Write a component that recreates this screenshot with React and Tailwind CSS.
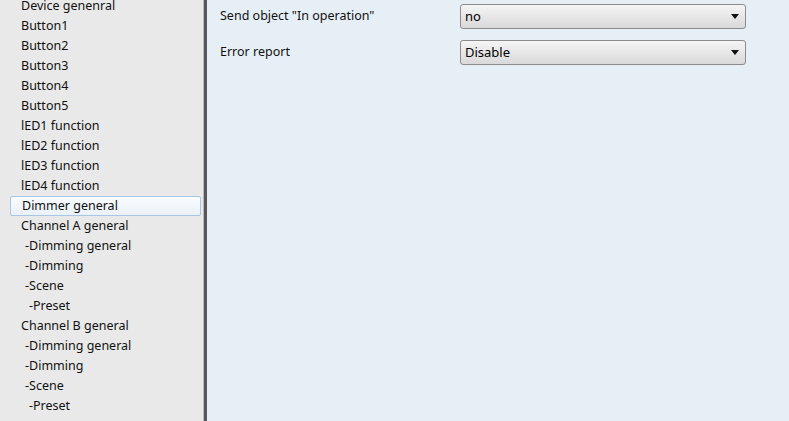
const items = [
  { label: 'Device genenral', indent: 'pl-[21px]' },
  { label: 'Button1', indent: 'pl-[21px]' },
  { label: 'Button2', indent: 'pl-[21px]' },
  { label: 'Button3', indent: 'pl-[21px]' },
  { label: 'Button4', indent: 'pl-[21px]' },
  { label: 'Button5', indent: 'pl-[21px]' },
  { label: 'lED1 function', indent: 'pl-[21px]' },
  { label: 'lED2 function', indent: 'pl-[21px]' },
  { label: 'lED3 function', indent: 'pl-[21px]' },
  { label: 'lED4 function', indent: 'pl-[21px]' },
  { label: 'Dimmer general', indent: 'pl-[21px]', selected: true },
  { label: 'Channel A general', indent: 'pl-[21px]' },
  { label: '-Dimming general', indent: 'pl-[25px]' },
  { label: '-Dimming', indent: 'pl-[25px]' },
  { label: '-Scene', indent: 'pl-[25px]' },
  { label: '-Preset', indent: 'pl-[29px]' },
  { label: 'Channel B general', indent: 'pl-[21px]' },
  { label: '-Dimming general', indent: 'pl-[25px]' },
  { label: '-Dimming', indent: 'pl-[25px]' },
  { label: '-Scene', indent: 'pl-[25px]' },
  { label: '-Preset', indent: 'pl-[29px]' },
]

function Select({ value }) {
  return (
    <div className="w-[286px] h-[25px] flex items-center justify-between pl-[4px] pr-[6px] rounded-[3px] border border-[#8c8c8c] bg-gradient-to-b from-[#f5f5f5] to-[#d9d9d9] text-[13px] text-black">
      <span>{value}</span>
      <svg width="8" height="5" viewBox="0 0 8 5">
        <path d="M0 0h8L4 5z" fill="#111" />
      </svg>
    </div>
  )
}

export default function App() {
  return (
    <div
      className="w-[789px] h-[421px] flex overflow-hidden"
      style={{ fontFamily: '"Noto Sans", "Open Sans", sans-serif' }}
    >
      <div className="w-[203px] shrink-0 bg-[#e9e9e9] text-[12.5px] text-[#111]">
        <div className="-mt-[4px]">
          {items.map((item, i) =>
            item.selected ? (
              <div key={i} className="h-[20px] ml-[10px] mr-[2px] flex items-center pl-[11px] border border-[#a9c6e4] rounded-[2px] bg-gradient-to-b from-[#fafcfe] to-[#eaf1f8]">
                {item.label}
              </div>
            ) : (
              <div key={i} className={`h-[20px] flex items-center ${item.indent}`}>
                {item.label}
              </div>
            )
          )}
        </div>
      </div>
      <div className="w-[1px] bg-[#b8b8b8]" />
      <div className="w-[3px] bg-[#575757]" />
      <div className="flex-1 bg-[#e7eff6] pt-[4px] pl-[13px] text-[12.5px] text-[#111]">
        <div className="flex items-center h-[25px]">
          <div className="w-[240px]">Send object "In operation"</div>
          <Select value="no" />
        </div>
        <div className="flex items-center h-[25px] mt-[11px]">
          <div className="w-[240px]">Error report</div>
          <Select value="Disable" />
        </div>
      </div>
    </div>
  )
}
